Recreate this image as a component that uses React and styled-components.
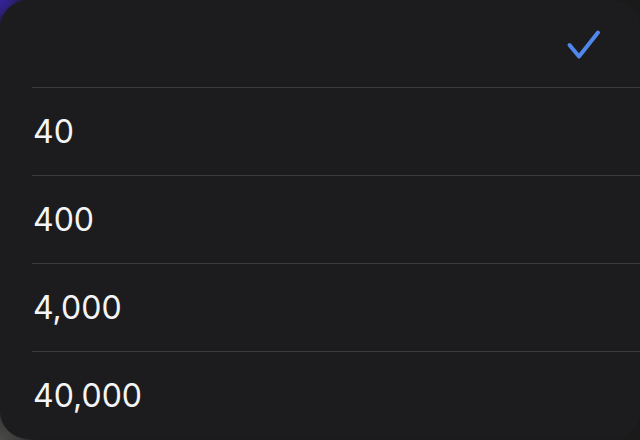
import React from 'react';
import styled, { createGlobalStyle } from 'styled-components';

const GlobalStyle = createGlobalStyle`
  html, body {
    margin: 0;
    padding: 0;
    width: 640px;
    height: 440px;
    overflow: hidden;
  }
  body {
    background: #1a1a1c;
    font-family: Inter, "Noto Sans", sans-serif;
  }
`;

// 배경
const Backdrop = styled.div`
  width: 640px;
  height: 440px;
  background:
    radial-gradient(circle at 0 100%, #4a4a48 0, #3a3a3a 20px, transparent 34px),
    radial-gradient(circle at 0 0, #3523a0 0, #2a1f70 14px, transparent 30px),
    #1a1a1b;
  overflow: hidden;
`;

// 시트
const Sheet = styled.div`
  width: 641px;
  height: 439px;
  background: #1c1c1e;
  border-radius: 28px;
  overflow: hidden;
  display: flex;
  flex-direction: column;
`;

const Row = styled.div`
  height: 88px;
  flex: none;
  display: flex;
  align-items: center;
  justify-content: ${(props) => (props.end ? 'flex-end' : 'flex-start')};
  margin-left: 32px;
  padding-right: ${(props) => (props.end ? '40px' : '0')};
  border-bottom: 1px solid #3a3a3c;
  box-sizing: border-box;
`;

const Label = styled.span`
  color: #f4f4f6;
  font-size: 32px;
  font-weight: 400;
  margin-left: 1px;
`;

const Check = styled.svg`
  width: 36px;
  height: 36px;
`;

const values = ['40', '400', '4,000', '40,000'];

export default function App() {
  return (
    <>
      <GlobalStyle />
      <Backdrop>
        <Sheet>
          <Row end>
            <Check viewBox="0 0 36 36">
              <path
                d="M4.5 19 L14 30.5 L33 6.5"
                fill="none"
                stroke="#4f87ea"
                strokeWidth="4"
                strokeLinecap="round"
                strokeLinejoin="round"
              />
            </Check>
          </Row>
          {values.map((v) => (
            <Row key={v}>
              <Label>{v}</Label>
            </Row>
          ))}
        </Sheet>
      </Backdrop>
    </>
  );
}
